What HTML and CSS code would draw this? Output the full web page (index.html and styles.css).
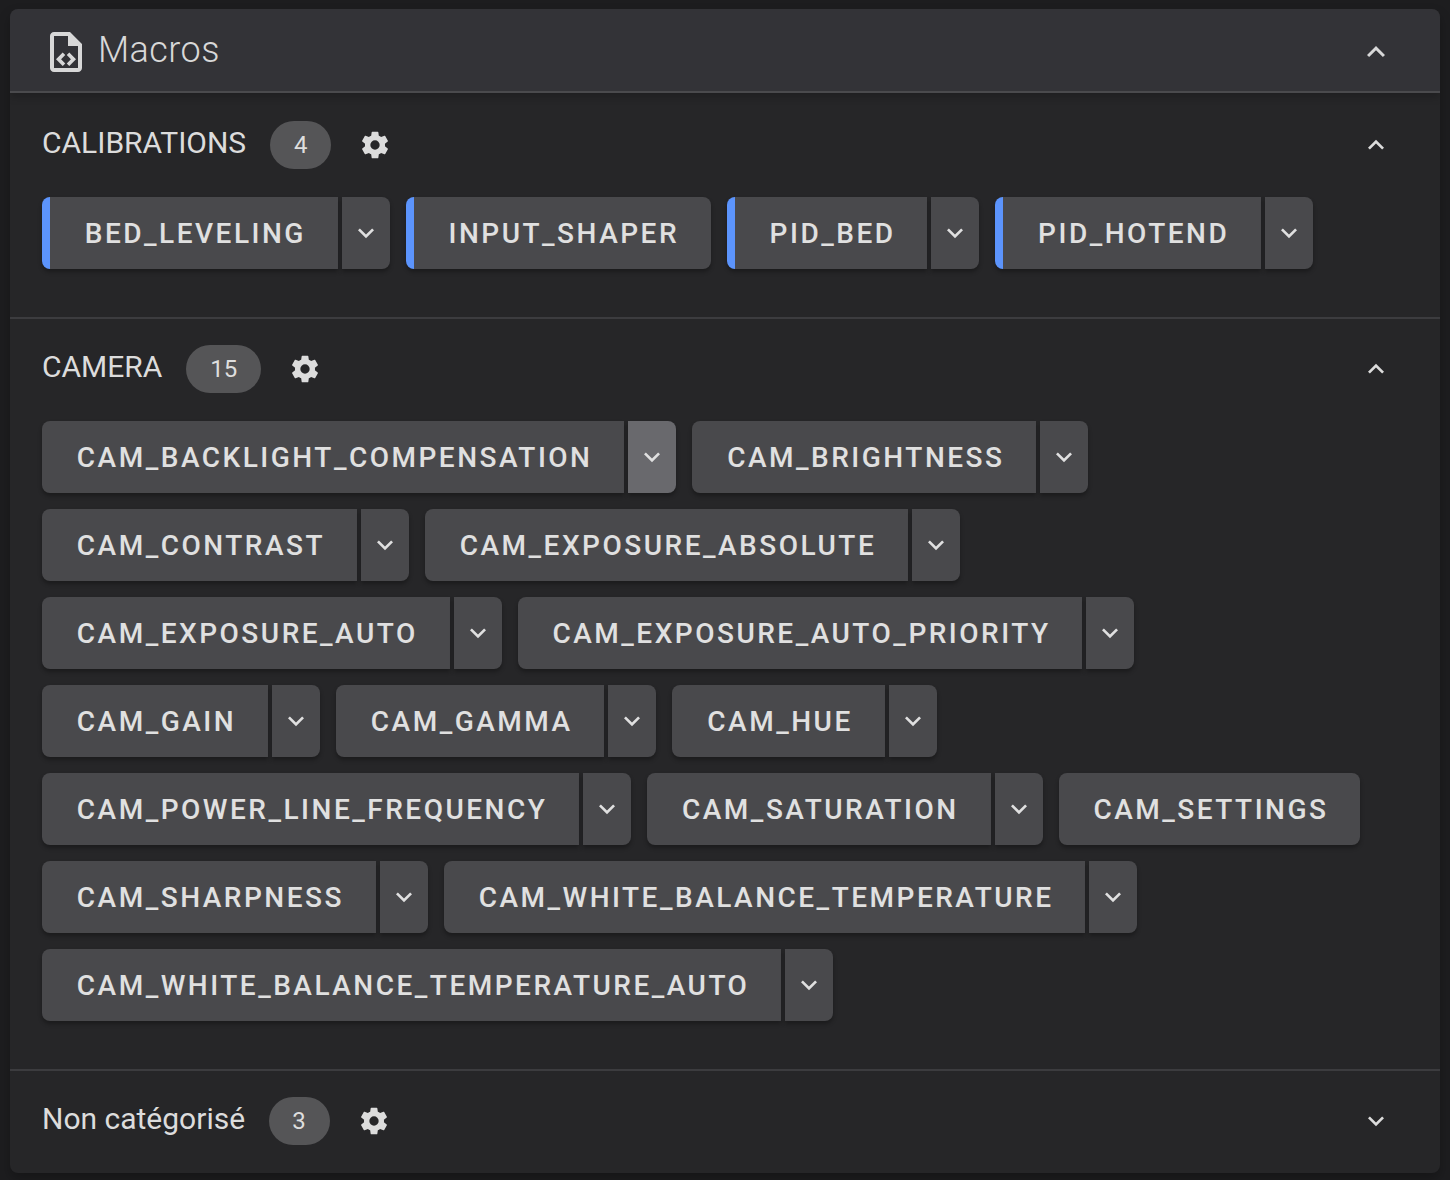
FILE: index.html
```html
<!DOCTYPE html>
<html>

	<head>
		<meta charset="UTF-8">
		<title>Macros</title>
		<link rel="stylesheet" href="styles.css">
	</head>

	<body>
		<svg class="defs" width="0" height="0">
			<symbol id="cog" viewBox="0 0 24 24"><path d="M12,15.5A3.5,3.5 0 0,1 8.5,12A3.5,3.5 0 0,1 12,8.5A3.5,3.5 0 0,1 15.5,12A3.5,3.5 0 0,1 12,15.5M19.43,12.97C19.47,12.65 19.5,12.33 19.5,12C19.5,11.67 19.47,11.34 19.43,11L21.54,9.37C21.73,9.22 21.78,8.95 21.66,8.73L19.66,5.27C19.54,5.05 19.27,4.96 19.05,5.05L16.56,6.05C16.04,5.66 15.5,5.32 14.87,5.07L14.5,2.42C14.46,2.18 14.25,2 14,2H10C9.75,2 9.54,2.18 9.5,2.42L9.13,5.07C8.5,5.32 7.96,5.66 7.44,6.05L4.95,5.05C4.73,4.96 4.46,5.05 4.34,5.27L2.34,8.73C2.21,8.95 2.27,9.22 2.46,9.37L4.57,11C4.53,11.34 4.5,11.67 4.5,12C4.5,12.33 4.53,12.65 4.57,12.97L2.46,14.63C2.27,14.78 2.21,15.05 2.34,15.27L4.34,18.73C4.46,18.95 4.73,19.03 4.95,18.95L7.44,17.94C7.96,18.34 8.5,18.68 9.13,18.93L9.5,21.58C9.54,21.82 9.75,22 10,22H14C14.25,22 14.46,21.82 14.5,21.58L14.87,18.93C15.5,18.67 16.04,18.34 16.56,17.94L19.05,18.95C19.27,19.03 19.54,18.95 19.66,18.73L21.66,15.27C21.78,15.05 21.73,14.78 21.54,14.63L19.43,12.97Z"/></symbol>
			<symbol id="up" viewBox="0 0 24 24"><path d="M7.41,15.41L12,10.83L16.59,15.41L18,14L12,8L6,14L7.41,15.41Z"/></symbol>
			<symbol id="down" viewBox="0 0 24 24"><path d="M7.41,8.58L12,13.17L16.59,8.58L18,10L12,16L6,10L7.41,8.58Z"/></symbol>
		</svg>

		<div class="panel">
			<div class="panel-head">
				<svg class="head-icon" viewBox="0 0 24 24"><path d="M14 2H6C4.89 2 4 2.9 4 4V20C4 21.11 4.89 22 6 22H18C19.11 22 20 21.11 20 20V8L14 2M18 20H6V4H13V9H18V20M9.54 15.65L11.63 17.74L10.35 19L7 15.65L10.35 12.3L11.63 13.56L9.54 15.65M17 15.65L13.65 19L12.38 17.74L14.47 15.65L12.38 13.56L13.65 12.3L17 15.65Z"/></svg>
				<span class="head-title">Macros</span>
				<svg class="head-chevron"><use href="#up"/></svg>
			</div>

			<div class="group first">
				<div class="group-head">
					<span class="group-title">CALIBRATIONS</span>
					<span class="badge">4</span>
					<svg class="cog"><use href="#cog"/></svg>
					<svg class="chevron"><use href="#up"/></svg>
				</div>
				<div class="macros">
					<div class="macro flagged"><button class="run">BED_LEVELING</button><button class="more"><svg><use href="#down"/></svg></button></div>
					<div class="macro flagged"><button class="run solo">INPUT_SHAPER</button></div>
					<div class="macro flagged"><button class="run">PID_BED</button><button class="more"><svg><use href="#down"/></svg></button></div>
					<div class="macro flagged"><button class="run">PID_HOTEND</button><button class="more"><svg><use href="#down"/></svg></button></div>
				</div>
			</div>

			<div class="group">
				<div class="group-head">
					<span class="group-title">CAMERA</span>
					<span class="badge">15</span>
					<svg class="cog"><use href="#cog"/></svg>
					<svg class="chevron"><use href="#up"/></svg>
				</div>
				<div class="macros">
					<div class="macro"><button class="run">CAM_BACKLIGHT_COMPENSATION</button><button class="more hover"><svg><use href="#down"/></svg></button></div>
					<div class="macro"><button class="run">CAM_BRIGHTNESS</button><button class="more"><svg><use href="#down"/></svg></button></div>
					<div class="macro"><button class="run">CAM_CONTRAST</button><button class="more"><svg><use href="#down"/></svg></button></div>
					<div class="macro"><button class="run">CAM_EXPOSURE_ABSOLUTE</button><button class="more"><svg><use href="#down"/></svg></button></div>
					<div class="macro"><button class="run">CAM_EXPOSURE_AUTO</button><button class="more"><svg><use href="#down"/></svg></button></div>
					<div class="macro"><button class="run">CAM_EXPOSURE_AUTO_PRIORITY</button><button class="more"><svg><use href="#down"/></svg></button></div>
					<div class="macro"><button class="run">CAM_GAIN</button><button class="more"><svg><use href="#down"/></svg></button></div>
					<div class="macro"><button class="run">CAM_GAMMA</button><button class="more"><svg><use href="#down"/></svg></button></div>
					<div class="macro"><button class="run">CAM_HUE</button><button class="more"><svg><use href="#down"/></svg></button></div>
					<div class="macro"><button class="run">CAM_POWER_LINE_FREQUENCY</button><button class="more"><svg><use href="#down"/></svg></button></div>
					<div class="macro"><button class="run">CAM_SATURATION</button><button class="more"><svg><use href="#down"/></svg></button></div>
					<div class="macro"><button class="run solo">CAM_SETTINGS</button></div>
					<div class="macro"><button class="run">CAM_SHARPNESS</button><button class="more"><svg><use href="#down"/></svg></button></div>
					<div class="macro"><button class="run">CAM_WHITE_BALANCE_TEMPERATURE</button><button class="more"><svg><use href="#down"/></svg></button></div>
					<div class="macro"><button class="run">CAM_WHITE_BALANCE_TEMPERATURE_AUTO</button><button class="more"><svg><use href="#down"/></svg></button></div>
				</div>
			</div>

			<div class="group last">
				<div class="group-head">
					<span class="group-title">Non catégorisé</span>
					<span class="badge">3</span>
					<svg class="cog"><use href="#cog"/></svg>
					<svg class="chevron"><use href="#down"/></svg>
				</div>
			</div>
		</div>
	</body>

</html>
```

FILE: styles.css
```css
* {
	margin: 0;
	padding: 0;
	box-sizing: border-box;
}

body {
	background: #1d1d1f;
	padding: 9px 10px 7px;
	font-family: Roboto, sans-serif;
	color: #e0e0e0;
}

.defs {
	position: absolute;
}

svg {
	fill: currentColor;
	display: block;
}

.panel {
	background: #262628;
	border-radius: 8px;
	overflow: hidden;
	box-shadow: 0 6px 12px rgba(0, 0, 0, 0.25);
}

.panel-head {
	height: 84px;
	background: #333337;
	border-bottom: 2px solid #4a4a4d;
	box-shadow: 0 4px 8px rgba(0, 0, 0, 0.2);
	display: flex;
	align-items: center;
	padding: 0 48px 0 32px;
	position: relative;
}

.head-icon {
	width: 48px;
	height: 48px;
	margin-top: 4px;
	color: #d8d8d8;
}

.head-title {
	font-size: 36px;
	font-weight: 300;
	letter-spacing: 0.45px;
	margin: -1px 0 0 8px;
	color: #d8d8d8;
}

.head-chevron {
	width: 36px;
	height: 36px;
	margin: 4px -2px 0 auto;
	color: #d8d8d8;
}

.group {
	padding: 0 48px 48px 32px;
	border-bottom: 2px solid #3c3c3f;
}

.group.last {
	padding-bottom: 2px;
	border-bottom: 0;
}

.group-head {
	height: 102px;
	padding-bottom: 2px;
	display: flex;
	align-items: center;
}

.group.first .group-head {
	height: 104px;
	padding-bottom: 0;
}

.group.last .group-head {
	height: 100px;
	padding-bottom: 0;
}

.group-title {
	font-size: 30px;
	padding-bottom: 6px;
	color: #dcdcdc;
}

.badge {
	min-width: 61px;
	height: 48px;
	margin-left: 24px;
	padding: 0 23.75px;
	border-radius: 24px;
	background: #555557;
	font-size: 24px;
	display: flex;
	align-items: center;
	justify-content: center;
	color: #dedede;
}

.last .badge {
	margin-left: 23.5px;
}

.cog {
	width: 32px;
	height: 32px;
	margin-left: 28px;
	color: #dcdcdc;
}

.chevron {
	width: 32px;
	height: 32px;
	margin-left: auto;
	color: #dcdcdc;
}

.macros {
	display: flex;
	flex-wrap: wrap;
	gap: 16px;
}

.macro {
	display: flex;
	gap: 4px;
	height: 72px;
}

.macro button {
	border: 0;
	height: 72px;
	background: #49494c;
	color: #e0e0e0;
	font-family: Roboto, sans-serif;
	font-size: 28px;
	font-weight: 500;
	letter-spacing: 2.5px;
	box-shadow: 0 3px 4px rgba(0, 0, 0, 0.3);
}

.run {
	padding: 0 31.85px 0 34.85px;
	border-radius: 8px 0 0 8px;
}

.run.solo {
	border-radius: 8px;
}

.more {
	width: 48px;
	border-radius: 0 8px 8px 0;
	display: flex;
	align-items: center;
	justify-content: center;
}

.more svg {
	width: 32px;
	height: 32px;
}

.macro .more.hover {
	background: #69696d;
}

.flagged .run {
	border-left: 8px solid #5c94fc;
	padding-left: 34.75px;
}
```
